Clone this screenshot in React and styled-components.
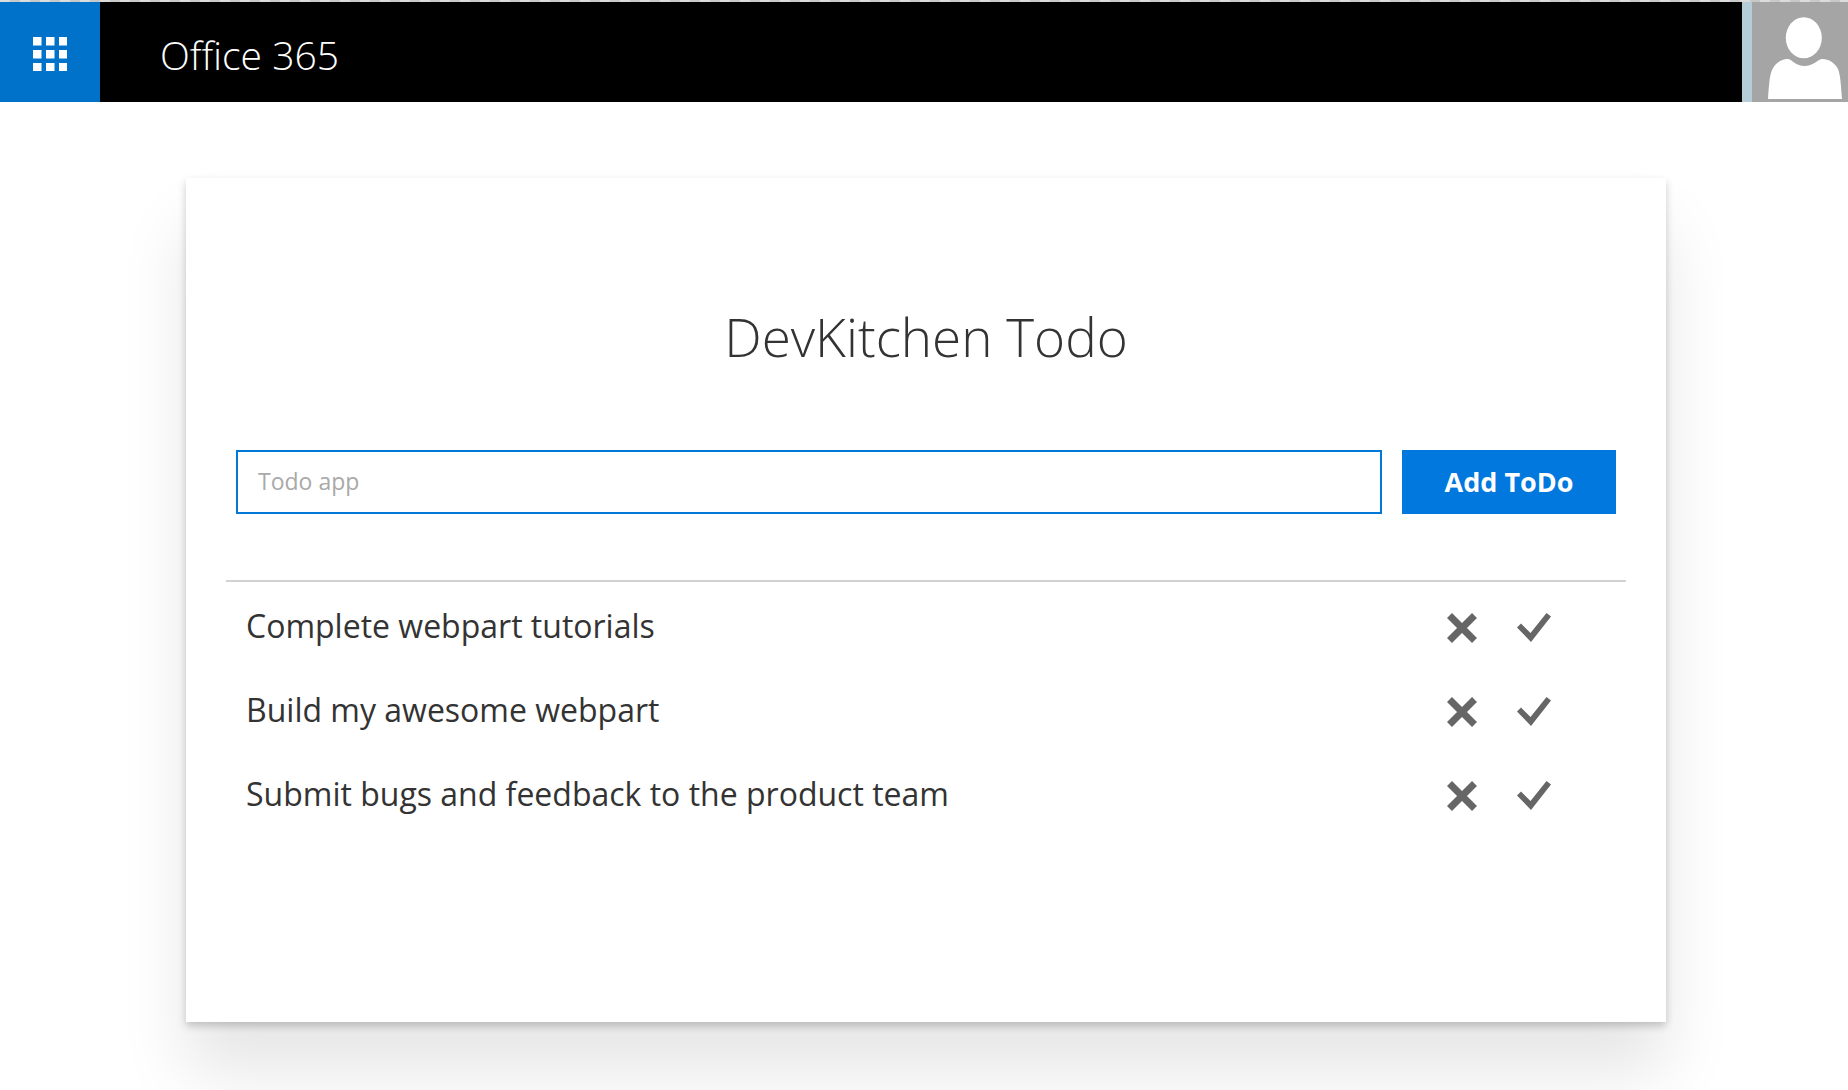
import React, { useState } from "react";
import styled, { createGlobalStyle } from "styled-components";

const GlobalStyle = createGlobalStyle`
  *, *::before, *::after { box-sizing: border-box; }
  body {
    margin: 0;
    background: #fff;
    color: #333;
    font-family: "Open Sans", "Noto Sans", sans-serif;
    overflow-x: hidden;
  }
`;

const Strip = styled.div`
  height: 2px;
  background: repeating-linear-gradient(90deg, #dcdcdc 0 10px, #c8c8c8 10px 20px);
`;

const Header = styled.header`
  display: flex;
  align-items: stretch;
  height: 100px;
  background: #000;
`;

const Launcher = styled.button`
  display: flex;
  align-items: center;
  justify-content: center;
  width: 100px;
  padding: 4px 0 0;
  border: 0;
  background: #0072c9;
`;

const Brand = styled.a`
  display: flex;
  flex: 1;
  align-items: center;
  padding: 6px 0 0 60px;
  color: #fff;
  font-size: 39px;
  font-weight: 300;
  line-height: 60px;
  text-decoration: none;
`;

const Persona = styled.button`
  width: 106px;
  padding: 0;
  border: 0;
  border-left: 10px solid #b4cdd8;
  background: #a5a5a5;

  svg { display: block; }
`;

const Main = styled.main`
  padding: 76px 182px 68px 186px;
`;

const Card = styled.section`
  min-height: 844px;
  padding: 120px 40px;
  background: #fff;
  box-shadow: 0 4px 8px rgba(0, 0, 0, 0.2), 0 50px 64px rgba(0, 0, 0, 0.1);
`;

const Title = styled.h1`
  margin: 0;
  font-size: 53px;
  font-weight: 300;
  line-height: 78px;
  text-align: center;
`;

const Form = styled.form`
  display: flex;
  gap: 20px;
  padding: 74px 10px 66px;
  border-bottom: 2px solid #d2d2d2;
`;

const Field = styled.input`
  flex: 1;
  min-width: 0;
  height: 64px;
  padding: 0 20px 2px;
  border: 2px solid #0078d7;
  border-radius: 0;
  outline: 0;
  background: #fff;
  color: #333;
  font: 400 23px/32px "Open Sans", "Noto Sans", sans-serif;

  &::placeholder { color: #a9a9a9; opacity: 1; }
`;

const AddButton = styled.button`
  width: 214px;
  height: 64px;
  padding: 0;
  border: 0;
  background: #0078de;
  color: #fff;
  font: 700 27px/32px "Open Sans", "Noto Sans", sans-serif;
`;

const List = styled.ul`
  margin: 0;
  padding: 4px 68px 0 20px;
  list-style: none;
`;

const Item = styled.li`
  display: flex;
  align-items: center;
  height: 84px;
`;

const Label = styled.span`
  flex: 1;
  padding-bottom: 4px;
  font-size: 32px;
  line-height: 48px;
`;

const Actions = styled.div`
  display: flex;
  gap: 24px;
`;

const IconButton = styled.button`
  display: flex;
  align-items: center;
  justify-content: center;
  width: 48px;
  height: 48px;
  padding: 0;
  border: 0;
  background: none;
  color: #666;
`;

const WaffleIcon = () => (
  <svg width="34" height="34" viewBox="0 0 34 34" fill="#fff" aria-hidden="true">
    {[0, 13, 26].map((y) =>
      [0, 13, 26].map((x) => <rect key={`${x}-${y}`} x={x} y={y} width="8.5" height="8.5" />)
    )}
  </svg>
);

const PersonIcon = () => (
  <svg width="96" height="100" viewBox="0 0 96 100" fill="#fff" aria-hidden="true">
    <ellipse cx="51.8" cy="35.8" rx="18" ry="20.5" />
    <path d="M16 97 C17 83 17.5 74 20 68 C23 61 30 56.5 36 57 C41 58 43.500 64 52.500 64 C61.500 64 64.500 58 70 57 C77 57 83 61 86 67 C88.500 73 89 84 90 97 Z" />
  </svg>
);

const CrossIcon = () => (
  <svg width="34" height="34" viewBox="0 0 34 34" stroke="currentColor" strokeWidth="7" aria-hidden="true">
    <path d="M4.500 4.500 L29.500 29.500 M29.500 4.500 L4.500 29.500" />
  </svg>
);

const CheckIcon = () => (
  <svg width="34" height="34" viewBox="0 0 34 34" fill="currentColor" aria-hidden="true">
    <path d="M0 16.500 L4 12.500 L13.500 22 L29.500 2 L34 5.500 L14 31 Z" />
  </svg>
);

const initialTodos = [
  "Complete webpart tutorials",
  "Build my awesome webpart",
  "Submit bugs and feedback to the product team",
];

export default function App() {
  const [todos, setTodos] = useState(initialTodos);
  const [draft, setDraft] = useState("");

  const remove = (index) => setTodos(todos.filter((_, i) => i !== index));
  const add = (event) => {
    event.preventDefault();
    if (draft.trim()) {
      setTodos([...todos, draft.trim()]);
      setDraft("");
    }
  };

  return (
    <>
      <GlobalStyle />
      <Strip />
      <Header>
        <Launcher type="button" aria-label="App launcher"><WaffleIcon /></Launcher>
        <Brand href="#">Office 365</Brand>
        <Persona type="button" aria-label="Account"><PersonIcon /></Persona>
      </Header>
      <Main>
        <Card>
          <Title>DevKitchen Todo</Title>
          <Form onSubmit={add}>
            <Field
              aria-label="Todo app"
              placeholder="Todo app"
              value={draft}
              onChange={(event) => setDraft(event.target.value)}
            />
            <AddButton type="submit">Add ToDo</AddButton>
          </Form>
          <List>
            {todos.map((todo, index) => (
              <Item key={todo}>
                <Label>{todo}</Label>
                <Actions>
                  <IconButton type="button" aria-label={`Delete ${todo}`} onClick={() => remove(index)}>
                    <CrossIcon />
                  </IconButton>
                  <IconButton type="button" aria-label={`Complete ${todo}`} onClick={() => remove(index)}>
                    <CheckIcon />
                  </IconButton>
                </Actions>
              </Item>
            ))}
          </List>
        </Card>
      </Main>
    </>
  );
}
